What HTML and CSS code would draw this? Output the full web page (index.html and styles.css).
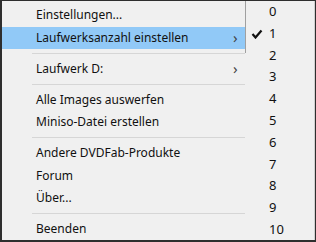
FILE: index.html
```html
<!DOCTYPE html>
<html lang="de">
<head>
    <meta charset="UTF-8">
    <title>Menü</title>
    <link rel="stylesheet" href="styles.css">
</head>
<body>
    <div class="screen">
        <div class="menu">
            <div class="item">Einstellungen...</div>
            <div class="item active">Laufwerksanzahl einstellen <span class="arrow">&rsaquo;</span></div>
            <div class="sep"></div>
            <div class="item">Laufwerk D: <span class="arrow">&rsaquo;</span></div>
            <div class="sep"></div>
            <div class="item">Alle Images auswerfen</div>
            <div class="item">Miniso-Datei erstellen</div>
            <div class="sep"></div>
            <div class="item">Andere DVDFab-Produkte</div>
            <div class="item">Forum</div>
            <div class="item">Über...</div>
            <div class="sep"></div>
            <div class="item">Beenden</div>
        </div>

        <div class="submenu">
            <div class="num">0</div>
            <div class="num">
                <svg class="check" width="12" height="10" viewBox="0 0 12 10">
                    <path d="M1.5 5 L4.5 8.5 L10.5 1.5" fill="none" stroke="#111" stroke-width="2.2"/>
                </svg>1</div>
            <div class="num">2</div>
            <div class="num">3</div>
            <div class="num">4</div>
            <div class="num">5</div>
            <div class="num">6</div>
            <div class="num">7</div>
            <div class="num">8</div>
            <div class="num">9</div>
            <div class="num">10</div>
        </div>
    </div>
</body>
</html>
```

FILE: styles.css
```css
html, body {
    margin: 0;
    padding: 0;
}

body {
    font-family: 'Noto Sans', sans-serif;
    font-size: 12px;
    color: #111;
    background-color: #2e2e2e;
}

.screen {
    width: 316px;
    height: 242px;
    box-sizing: border-box;
    border-top: 1px solid #2e2e2e;
    border-left: 2px solid #2e2e2e;
    border-bottom: 2px solid #2e2e2e;
    border-right: 1px solid #2e2e2e;
    background-color: #f0f0f0;
    display: flex;
}

.menu {
    width: 243px;
    padding-top: 3px;
}

.item {
    height: 22.5px;
    line-height: 22px;
    padding-left: 34px;
    position: relative;
    white-space: nowrap;
}

.item.active {
    background-color: #91c9f7;
}

.arrow {
    position: absolute;
    left: 231px;
    top: -1px;
    font-size: 15px;
    color: #444;
}

.sep {
    height: 8.5px;
    margin-left: 30px;
    box-sizing: border-box;
    border-bottom: 1px solid #d6d6d6;
    transform: translateY(-4px);
}

.submenu {
    flex: 1;
    position: relative;
    border-right: 1px solid #d0d0d0;
}

.submenu::before {
    content: '';
    position: absolute;
    left: 0;
    top: 0;
    width: 1px;
    height: 52px;
    background-color: #a0a0a0;
}

.num {
    height: 21.8px;
    line-height: 20px;
    padding-left: 24px;
    font-size: 13px;
    position: relative;
}

.check {
    position: absolute;
    left: 6px;
    top: 6px;
}
```
